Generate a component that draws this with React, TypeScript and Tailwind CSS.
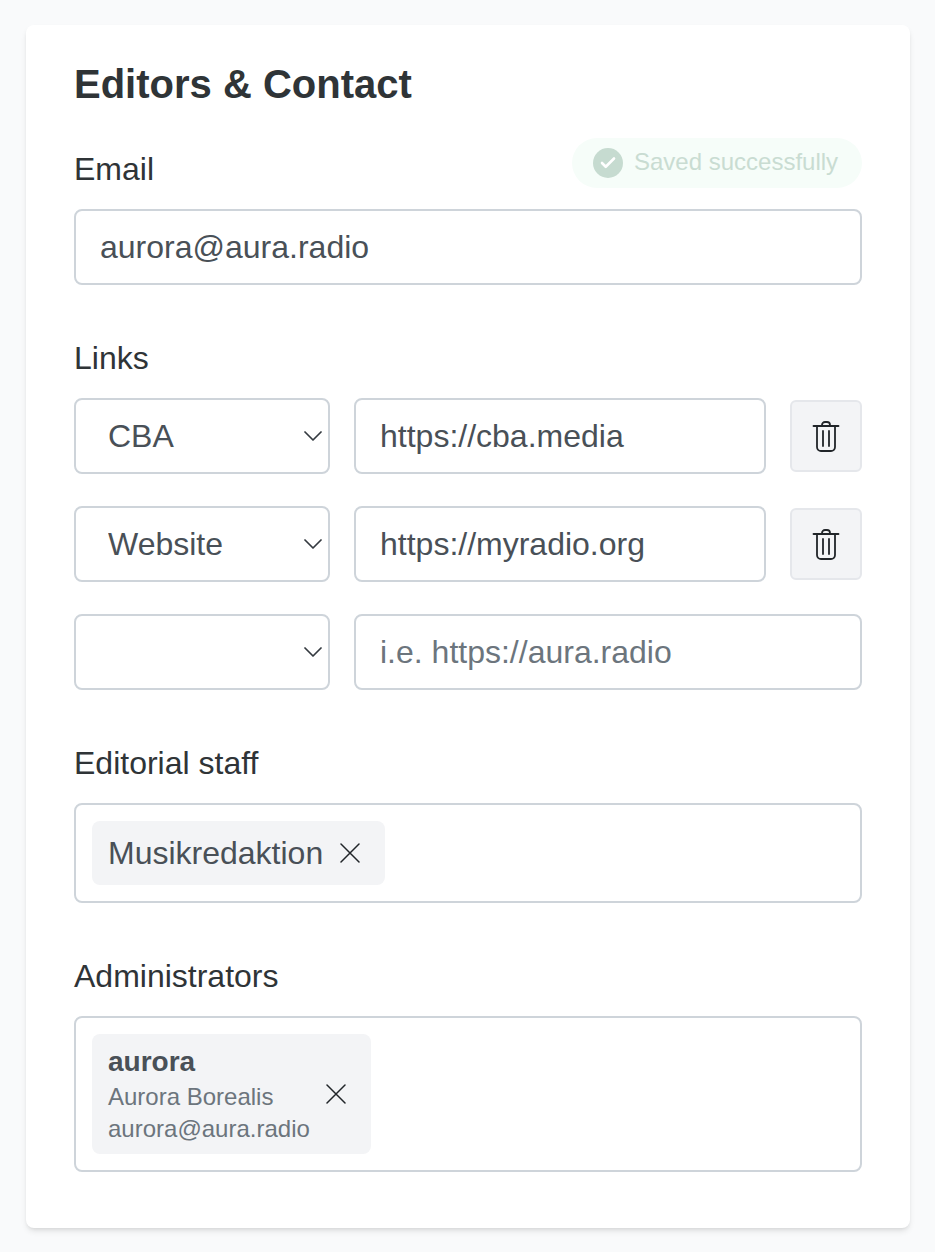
import { Check } from "lucide-react";

function Chevron() {
  return (
    <svg className="pointer-events-none absolute right-[8px] top-[33px] h-[10px] w-[18px] text-[#343a40]" viewBox="0 0 18 10" fill="none" stroke="currentColor" strokeWidth="1.75" strokeLinecap="round" strokeLinejoin="round">
      <path d="M1 1l8 8 8-8" />
    </svg>
  );
}

function Trash() {
  return (
    <svg className="h-[32px] w-[28px] text-[#212529]" viewBox="0 0 28 32" fill="none" stroke="currentColor" strokeWidth="1.8" strokeLinecap="round" strokeLinejoin="round">
      <path d="M1.5 6h25" />
      <path d="M10 6V5A3 3 0 0 1 13 2h2a3 3 0 0 1 3 3V6" />
      <path d="M5 6v21a4 4 0 0 0 4 4h10a4 4 0 0 0 4-4V6" />
      <path d="M11 11v15M17 11v15" />
    </svg>
  );
}

function Cross() {
  return (
    <svg className="h-[20px] w-[20px] text-[#212529]" viewBox="0 0 20 20" fill="none" stroke="currentColor" strokeWidth="1.5" strokeLinecap="round">
      <path d="M1 1l18 18M19 1L1 19" />
    </svg>
  );
}

function LinkRow({ type, url, placeholder }: { type: string; url: string; placeholder?: string }) {
  return (
    <div className="flex items-center gap-[24px]">
      <div className="relative h-[76px] w-[256px] shrink-0">
        <select
          defaultValue={type}
          className="h-full w-full appearance-none rounded-[8px] border-2 border-[#ced4da] bg-white pl-[32px] text-[32px] text-[#495057] outline-none"
        >
          <option value=""></option>
          <option value="CBA">CBA</option>
          <option value="Website">Website</option>
        </select>
        <Chevron />
      </div>
      <input
        readOnly
        value={url}
        placeholder={placeholder}
        className="h-[76px] min-w-0 flex-1 rounded-[8px] border-2 border-[#ced4da] px-[24px] text-[32px] text-[#495057] outline-none placeholder:text-[#6c757d]"
      />
      {url && (
        <button className="flex h-[72px] w-[72px] shrink-0 items-center justify-center rounded-[6px] border-2 border-gray-200 bg-gray-100">
          <Trash />
        </button>
      )}
    </div>
  );
}

export default function App() {
  return (
    <div className="min-h-[1252px] bg-gray-50 pb-[24px] pl-[26px] pr-[25px] pt-[25px] font-['Liberation_Sans',Arial,sans-serif] text-[#2f3437]">
      <div className="relative rounded-[8px] bg-white px-[48px] pb-[56px] pt-[35px] shadow-md">
        <h1 className="mb-[37px] text-[40px] font-bold leading-[48px]">Editors &amp; Contact</h1>

        <div className="absolute right-[48px] top-[113px] flex h-[50px] w-[290px] items-center gap-[11px] rounded-full bg-[#f6fdf9] pl-[21px]">
          <span className="flex h-[30px] w-[30px] items-center justify-center rounded-full bg-[#c6dbd0]">
            <Check className="h-[18px] w-[18px] text-white" strokeWidth={3.5} />
          </span>
          <span className="mb-[2px] text-[24px] text-[#c9dcd2]">Saved successfully</span>
        </div>

        <label className="mb-[16px] block text-[32px] leading-[48px]">Email</label>
        <input
          readOnly
          value="aurora@aura.radio"
          className="block h-[76px] w-full rounded-[8px] border-2 border-[#ced4da] px-[24px] text-[32px] text-[#495057] outline-none"
        />

        <label className="mb-[16px] mt-[49px] block text-[32px] leading-[48px]">Links</label>
        <div className="flex flex-col gap-[32px]">
          <LinkRow type="CBA" url="https://cba.media" />
          <LinkRow type="Website" url="https://myradio.org" />
          <LinkRow type="" url="" placeholder="i.e. https://aura.radio" />
        </div>

        <label className="mb-[16px] mt-[49px] block text-[32px] leading-[48px]">Editorial staff</label>
        <div className="flex rounded-[8px] border-2 border-[#ced4da] p-[16px]">
          <div className="flex h-[64px] items-center gap-[17px] rounded-[8px] bg-gray-100 pl-[16px] pr-[25px] text-[32px] text-[#495057]">
            <span>Musikredaktion</span>
            <Cross />
          </div>
        </div>

        <label className="mb-[16px] mt-[49px] block text-[32px] leading-[48px]">Administrators</label>
        <div className="flex rounded-[8px] border-2 border-[#ced4da] p-[16px]">
          <div className="flex items-center gap-[16px] rounded-[8px] bg-gray-100 pb-[9px] pl-[16px] pr-[25px] pt-[8px]">
            <div className="flex flex-col">
              <span className="text-[28px] font-bold leading-[39px] text-[#495057]">aurora</span>
              <span className="text-[24px] leading-[32px] text-[#6c757d]">Aurora Borealis</span>
              <span className="text-[24px] leading-[32px] text-[#6c757d]">aurora@aura.radio</span>
            </div>
            <Cross />
          </div>
        </div>
      </div>
    </div>
  );
}
